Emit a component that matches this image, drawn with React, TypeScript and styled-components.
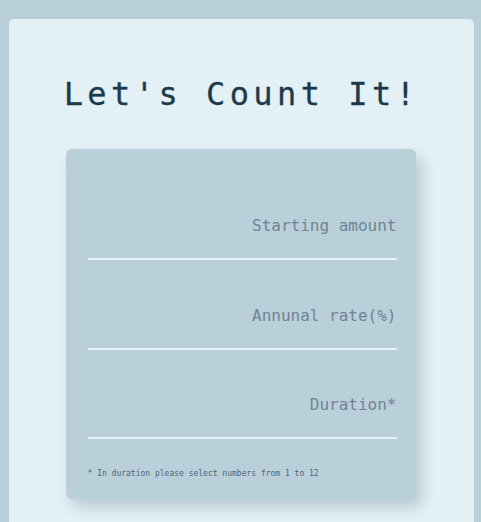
import React from "react";
import styled, { createGlobalStyle } from "styled-components";

const GlobalStyle = createGlobalStyle`
  html, body {
    margin: 0;
    padding: 0;
    background: #b9d0da;
  }
  body {
    font-family: "DejaVu Sans Mono", "Liberation Mono", monospace;
  }
`;

const Page = styled.div`
  padding: 19px 7px 0 9px;
  height: 522px;
  box-sizing: border-box;
  overflow: hidden;
`;

const Panel = styled.main`
  background: #e3f0f6;
  border-radius: 5px;
  padding: 56px 2px 40px 0;
  min-height: 560px;
  box-sizing: border-box;
  display: flex;
  flex-direction: column;
  align-items: center;
`;

const Title = styled.h1`
  margin: 0 0 36px;
  font-family: "DejaVu Sans Mono", monospace;
  font-size: 32px;
  line-height: 38px;
  font-weight: normal;
  letter-spacing: 4.45px;
  color: #1b3a4b;
  padding-left: 2px;
  -webkit-text-stroke: 0.3px #1b3a4b;
`;

const Card = styled.form`
  width: 350px;
  height: 350px;
  box-sizing: border-box;
  background: #b9d0db;
  border-radius: 6px;
  box-shadow: 6px 8px 14px rgba(40, 70, 85, 0.22);
  padding: 59px 20px 0 22px;
  display: flex;
  flex-direction: column;
  gap: 37.5px;
`;

const Field = styled.input`
  display: block;
  width: 309px;
  height: 52px;
  box-sizing: border-box;
  padding: 0 0 15px;
  border: none;
  border-bottom: 2px solid #e4f3f9;
  background: transparent;
  outline: none;
  text-align: right;
  font-family: "DejaVu Sans Mono", monospace;
  font-size: 16px;
  color: #1b3a4b;
  &::placeholder {
    color: #6f8590;
    opacity: 1;
  }
`;

const Note = styled.p`
  margin: -8px 0 0;
  font-family: "DejaVu Sans Mono", monospace;
  font-size: 8px;
  line-height: 10px;
  color: #4d6571;
`;

export default function App() {
  return (
    <>
      <GlobalStyle />
      <Page>
        <Panel>
          <Title>Let's Count It!</Title>
          <Card onSubmit={(e) => e.preventDefault()}>
            <Field placeholder="Starting amount" />
            <Field placeholder="Annunal rate(%)" />
            <Field placeholder="Duration*" />
            <Note>* In duration please select numbers from 1 to 12</Note>
          </Card>
        </Panel>
      </Page>
    </>
  );
}
